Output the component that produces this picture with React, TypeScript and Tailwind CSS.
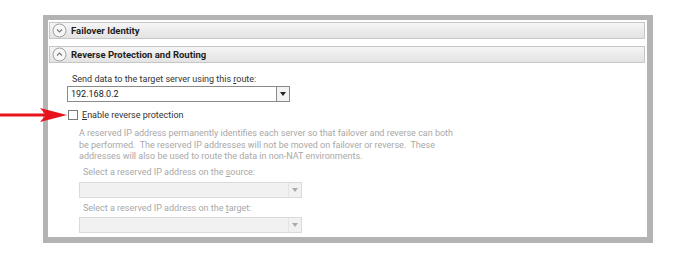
import React from "react";

function Chevron({ up }: { up?: boolean }) {
  return (
    <svg width="15" height="15" viewBox="0 0 15 15" className="shrink-0">
      <circle cx="7.5" cy="7.5" r="6.5" fill="#f7f7f7" stroke="#a0a0a0" strokeWidth="1" />
      {up ? (
        <path d="M5 8.5 L7.5 6 L10 8.5" fill="none" stroke="#777" strokeWidth="1.1" />
      ) : (
        <path d="M5 6.5 L7.5 9 L10 6.5" fill="none" stroke="#777" strokeWidth="1.1" />
      )}
    </svg>
  );
}

function SectionBar({ title, up }: { title: string; up?: boolean }) {
  return (
    <div className="h-[17px] flex items-center gap-[4px] pl-[2px] border border-[#c6c6c6] bg-gradient-to-b from-[#f5f5f5] to-[#e3e3e3]">
      <Chevron up={up} />
      <span className="text-[9.5px] font-bold text-[#1e1e1e] leading-none">{title}</span>
    </div>
  );
}

function Select({ value, disabled }: { value?: string; disabled?: boolean }) {
  return (
    <div
      className={
        disabled
          ? "w-[223px] h-[16px] flex border border-[#dadada] bg-[#f1f1f1]"
          : "w-[223px] h-[16px] flex border border-[#8a8a8a] bg-white"
      }
    >
      <div className="flex-1 flex items-center pl-[3px] text-[9px] text-[#222] leading-none">{value}</div>
      <div
        className={
          disabled
            ? "w-[13px] flex items-center justify-center border-l border-[#e4e4e4]"
            : "w-[13px] flex items-center justify-center border-l border-[#8a8a8a] bg-[#f3f3f3]"
        }
      >
        <svg width="6" height="4" viewBox="0 0 6 4">
          <path d="M0 0 H6 L3 4 Z" fill={disabled ? "#aaaaaa" : "#222"} />
        </svg>
      </div>
    </div>
  );
}

export default function App() {
  return (
    <div
      className="relative w-[696px] h-[258px] bg-white pt-[15px] pl-[43px]"
      style={{ fontFamily: 'Roboto, "Liberation Sans", sans-serif' }}
    >
      <div className="w-[610px] h-[228px] border-[#b3b3b3] border-t-[5px] border-l-[5px] border-r-[6px] border-b-[6px] bg-white pt-[2px] pl-[1px] pr-[2px]">
        <div className="flex flex-col gap-[7px]">
          <SectionBar title="Failover Identity" />
          <SectionBar title="Reverse Protection and Routing" up />
        </div>

        <div className="pl-[18px] pt-[9px]">
          <div className="pl-[5px] h-[14px] text-[9px] text-[#333] leading-[14px]">
            Send data to the target server using this <span className="underline">r</span>oute:
          </div>
          <Select value="192.168.0.2" />
          <div className="mt-[6px] h-[14px] flex items-center gap-[4px] pl-[1px]">
            <div className="w-[10px] h-[10px] border border-[#7a7a7a] bg-white" />
            <span className="text-[9px] text-[#333] leading-[14px]">
              <span className="underline">E</span>nable reverse protection
            </span>
          </div>

          <div className="pl-[12px] mt-[6px]">
            <p className="text-[9px] leading-[11.5px] text-[#a8a8a8] whitespace-nowrap">
              A reserved IP address permanently identifies each server so that failover and reverse can both
              <br />
              be performed.&nbsp; The reserved IP addresses will not be moved on failover or reverse.&nbsp; These
              <br />
              addresses will also be used to route the data in non-NAT environments.
            </p>
            <div className="pl-[4px] mt-[2px] h-[14px] text-[9px] leading-[14px] text-[#a8a8a8]">
              Select a reserved IP address on the <span className="underline">s</span>ource:
            </div>
            <div className="mt-[3px]">
              <Select disabled />
            </div>
            <div className="pl-[4px] mt-[3px] h-[14px] text-[9px] leading-[14px] text-[#a8a8a8]">
              Select a reserved IP address on the <span className="underline">t</span>arget:
            </div>
            <div className="mt-[2px]">
              <Select disabled />
            </div>
          </div>
        </div>
      </div>

      {/* red arrow pointing at the checkbox */}
      <svg className="absolute left-0 top-[106px]" width="68" height="18" viewBox="0 0 68 18">
        <path d="M0 7.5 H46 V10.5 H0 Z" fill="#e8141c" />
        <path d="M40 2 L67 9 L40 16 L46 9 Z" fill="#e8141c" />
      </svg>
    </div>
  );
}
